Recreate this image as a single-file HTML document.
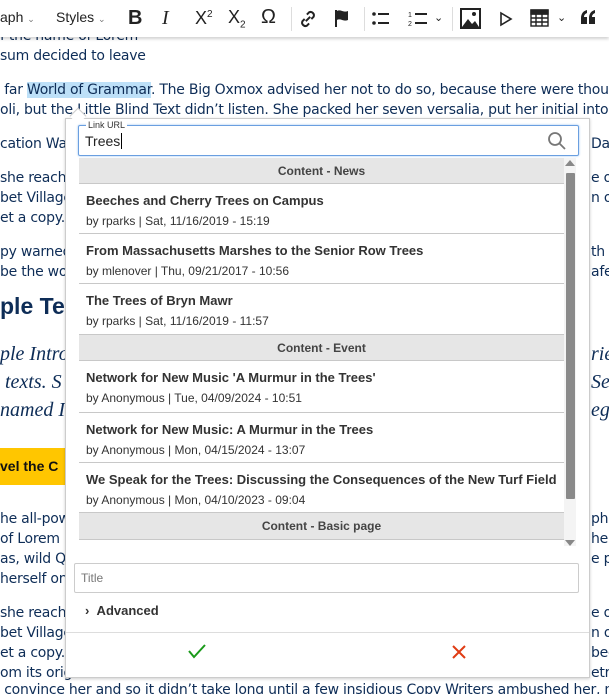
<!DOCTYPE html>
<html><head><meta charset="utf-8"><style>
*{margin:0;padding:0;box-sizing:border-box}
body{width:609px;height:694px;overflow:hidden;background:#fff;position:relative;font-family:"DejaVu Sans","Liberation Sans",sans-serif;color:#0e2d57}
#wrap{position:absolute;left:0;top:0;width:609px;height:694px;overflow:hidden}
.t{position:absolute;font-size:14px;white-space:nowrap;line-height:20px;letter-spacing:-0.25px}
.r{position:absolute;font-size:14px;white-space:nowrap;line-height:20px;left:591px;letter-spacing:-0.25px}
.h{font-family:"Liberation Sans",sans-serif;font-weight:bold;font-size:23px;letter-spacing:0}
.i{font-family:"Liberation Serif",serif;font-style:italic;font-size:20px;letter-spacing:0}
#tb{position:absolute;left:0;top:0;width:609px;height:37px;background:#fff;box-shadow:0 2px 3px rgba(0,0,0,.18);z-index:5;font-family:"Liberation Sans",sans-serif;color:#222;overflow:hidden}
#tb .x{position:absolute;top:9px;font-size:14px}
.dv{position:absolute;top:7px;width:1px;height:24px;background:#ddd}
#pop{position:absolute;left:65px;top:118px;width:525px;height:560px;background:#fff;border:1px solid #ccc;box-shadow:0 1px 3px rgba(0,0,0,.2);z-index:4;font-family:"Liberation Sans",sans-serif;color:#333}
.hd{position:absolute;left:13px;width:485px;height:26px;background:#e6e6e6;border-bottom:1px solid #c8c8c8;text-align:center;font-size:12px;line-height:26px;color:#444;font-weight:bold}
.it{position:absolute;left:13px;width:485px;border-bottom:1px solid #c8c8c8}
.it b{position:absolute;left:7px;top:9px;font-size:13px;color:#333;white-space:nowrap}
.it span{position:absolute;left:7px;top:30px;font-size:12px;color:#333;white-space:nowrap}
</style></head><body>
<div id="wrap">
<div class="t" style="left:0;top:26px">f the name of Lorem</div>
<div class="t" style="left:0;top:46px">sum decided to leave</div>
<div class="t" style="left:0;top:80px">&nbsp;far <span style="background:#bde0f8">World of Grammar</span>. The Big Oxmox advised her not to do so, because there were thou</div>
<div class="t" style="left:0;top:100px">oli, but the Little Blind Text didn’t listen. She packed her seven versalia, put her initial into</div>
<div class="t" style="left:0;top:134px">cation War</div><div class="r" style="top:134px">Dar</div>
<div class="t" style="left:0;top:168px">she reache</div><div class="r" style="top:168px">e o</div>
<div class="t" style="left:0;top:188px">bet Village</div><div class="r" style="top:188px">n o</div>
<div class="t" style="left:0;top:208px">et a copy.</div>
<div class="t" style="left:0;top:242px">py warned</div><div class="r" style="top:242px">th</div>
<div class="t" style="left:0;top:262px">be the wo</div><div class="r" style="top:262px">afe</div>
<div class="t h" style="left:0;top:293px;line-height:26px">ple Te</div>
<div class="t i" style="left:0;top:342px;line-height:24px">ple Intro</div><div class="r i" style="top:342px;line-height:24px">rie</div>
<div class="t i" style="left:0;top:370px;line-height:24px">&nbsp;texts. S</div><div class="r i" style="top:370px;line-height:24px">Se</div>
<div class="t i" style="left:0;top:398px;line-height:24px">named I</div><div class="r i" style="top:398px;line-height:24px">eg</div>
<div style="position:absolute;left:0;top:448px;width:70px;height:37px;background:#ffc600"></div>
<div class="t" style="left:0;top:456px;font-family:'Liberation Sans',sans-serif;font-weight:bold;color:#111;letter-spacing:0">vel the C</div>
<div class="t" style="left:0;top:509px">he all-pow</div><div class="r" style="top:509px">ph</div>
<div class="t" style="left:0;top:529px">of Lorem I</div><div class="r" style="top:529px">he</div>
<div class="t" style="left:0;top:549px">as, wild Q</div><div class="r" style="top:549px">e p</div>
<div class="t" style="left:0;top:569px">herself on</div>
<div class="t" style="left:0;top:603px">she reache</div><div class="r" style="top:603px">e o</div>
<div class="t" style="left:0;top:623px">bet Village</div><div class="r" style="top:623px">n o</div>
<div class="t" style="left:0;top:643px">et a copy.</div><div class="r" style="top:643px">bec</div>
<div class="t" style="left:0;top:663px">om its orig</div><div class="r" style="top:663px">etr</div>
<div class="t" style="left:0;top:680px">&nbsp;convince her and so it didn’t take long until a few insidious Copy Writers ambushed her, m</div>
</div>

<div id="tb">
<div class="x" style="left:0">aph <span style="font-size:9px;color:#777">⌄</span></div>
<div class="x" style="left:56px">Styles <span style="font-size:9px;color:#777">⌄</span></div>
<div class="x" style="left:128px;font-size:20px;font-weight:bold;top:7px">B</div>
<div class="x" style="left:162px;font-size:20px;font-style:italic;font-family:'Liberation Serif',serif;top:7px">I</div>
<div class="x" style="left:195px;font-size:18px;top:8px">X<sup style="font-size:10px">2</sup></div>
<div class="x" style="left:228px;font-size:18px;top:7px">X<sub style="font-size:10px">2</sub></div>
<div class="x" style="left:261px;font-size:20px;top:6px">Ω</div>
<div class="dv" style="left:291px"></div>
<svg style="position:absolute;left:298px;top:9px" width="20" height="20" viewBox="0 0 18 18" fill="none" stroke="#222" stroke-width="1.8"><path d="M7 11l4-4M8 5l2-2a3 3 0 014 4l-2 2M10 13l-2 2a3 3 0 01-4-4l2-2"/></svg>
<svg style="position:absolute;left:333px;top:8px" width="20" height="20" viewBox="0 0 20 20"><path d="M3 2v17" stroke="#222" stroke-width="2"/><path d="M4 3c4-2 6 2 11 0v9c-5 2-7-2-11 0z" fill="#222"/></svg>
<div class="dv" style="left:364px"></div>
<svg style="position:absolute;left:372px;top:11px" width="18" height="16" viewBox="0 0 18 16" fill="#222"><circle cx="2" cy="3" r="1.8"/><circle cx="2" cy="12" r="1.8"/><rect x="6" y="2" width="11" height="2"/><rect x="6" y="11" width="11" height="2"/></svg>
<svg style="position:absolute;left:408px;top:10px" width="20" height="18" viewBox="0 0 20 18" fill="#222"><text x="0" y="7" font-size="7" font-family="Liberation Sans">1</text><text x="0" y="16" font-size="7" font-family="Liberation Sans">2</text><rect x="7" y="3" width="12" height="2"/><rect x="7" y="12" width="12" height="2"/></svg>
<div class="x" style="left:434px;font-size:11px;top:11px">⌄</div>
<div class="dv" style="left:452px"></div>
<svg style="position:absolute;left:460px;top:8px" width="21" height="21" viewBox="0 0 21 21"><rect x="1" y="1" width="19" height="19" fill="none" stroke="#222" stroke-width="2"/><path d="M2 19l6-8 4 5 3-3 4 6z" fill="#222"/><circle cx="14" cy="6" r="2" fill="#222"/></svg>
<svg style="position:absolute;left:499px;top:11px" width="14" height="16" viewBox="0 0 14 16"><path d="M2 2l10 6-10 6z" fill="none" stroke="#222" stroke-width="1.6"/></svg>
<svg style="position:absolute;left:530px;top:9px" width="19" height="18" viewBox="0 0 19 18" fill="none" stroke="#222" stroke-width="1.4"><rect x="1" y="1" width="17" height="16"/><path d="M1 5h17M1 9h17M1 13h17M6 5v12M12 5v12"/><rect x="1" y="1" width="17" height="4" fill="#222"/></svg>
<div class="x" style="left:557px;font-size:11px;top:11px">⌄</div>
<svg style="position:absolute;left:580px;top:10px" width="16" height="14" viewBox="0 0 16 14" fill="#222"><path d="M1 14V8c0-4 2-7 6-8v3c-2 1-3 2-3 4h3v7zM9 14V8c0-4 2-7 6-8v3c-2 1-3 2-3 4h3v7z"/></svg>
</div>

<div style="position:absolute;left:72px;top:110px;width:12px;height:12px;background:#fff;border-left:1px solid #ccc;border-top:1px solid #ccc;transform:rotate(45deg);z-index:5"></div>
<div id="pop">
<div style="position:absolute;left:12px;top:6px;width:501px;height:31px;border:1px solid #6a9fe0;border-radius:2px;box-shadow:0 0 2px #9cc3f0"></div>
<div style="position:absolute;left:20px;top:1px;font-size:9px;background:#fff;padding:0 2px;color:#333">Link URL</div>
<div style="position:absolute;left:19px;top:14px;font-size:14px;color:#222">Trees<span style="border-left:1px solid #000;margin-left:1px"></span></div>
<svg style="position:absolute;left:481px;top:12px" width="20" height="20" viewBox="0 0 20 20" fill="none" stroke="#777" stroke-width="1.8"><circle cx="8" cy="8" r="6"/><path d="M12.5 12.5L18 18"/></svg>
<div class="hd" style="top:39px">Content - News</div>
<div class="it" style="top:65px;height:50px"><b>Beeches and Cherry Trees on Campus</b><span>by rparks | Sat, 11/16/2019 - 15:19</span></div>
<div class="it" style="top:115px;height:50px"><b>From Massachusetts Marshes to the Senior Row Trees</b><span>by mlenover | Thu, 09/21/2017 - 10:56</span></div>
<div class="it" style="top:165px;height:51px"><b>The Trees of Bryn Mawr</b><span>by rparks | Sat, 11/16/2019 - 11:57</span></div>
<div class="hd" style="top:216px">Content - Event</div>
<div class="it" style="top:242px;height:52px"><b>Network for New Music 'A Murmur in the Trees'</b><span>by Anonymous | Tue, 04/09/2024 - 10:51</span></div>
<div class="it" style="top:294px;height:50px"><b>Network for New Music: A Murmur in the Trees</b><span>by Anonymous | Mon, 04/15/2024 - 13:07</span></div>
<div class="it" style="top:344px;height:50px"><b>We Speak for the Trees: Discussing the Consequences of the New Turf Field</b><span>by Anonymous | Mon, 04/10/2023 - 09:04</span></div>
<div class="hd" style="top:394px;height:27px">Content - Basic page</div>
<div style="position:absolute;left:498px;top:39px;width:12px;height:388px;background:#f4f4f4"></div>
<div style="position:absolute;left:500px;top:54px;width:9px;height:326px;background:#8a8a8a;border-radius:1px"></div>
<div style="position:absolute;left:499px;top:41px;width:0;height:0;border-left:5px solid transparent;border-right:5px solid transparent;border-bottom:6px solid #888"></div>
<div style="position:absolute;left:499px;top:421px;width:0;height:0;border-left:5px solid transparent;border-right:5px solid transparent;border-top:6px solid #888"></div>
<div style="position:absolute;left:8px;top:444px;width:505px;height:30px;border:1px solid #ccc;border-radius:2px"></div>
<div style="position:absolute;left:15px;top:452px;font-size:12px;color:#777">Title</div>
<div style="position:absolute;left:19px;top:484px;font-size:13px;font-weight:bold;color:#333">›&nbsp;&nbsp;Advanced</div>
<div style="position:absolute;left:0;top:513px;width:523px;height:1px;background:#ddd"></div>
<svg style="position:absolute;left:121px;top:524px" width="20" height="16" viewBox="0 0 20 16"><path d="M2 8l5 6L18 2" fill="none" stroke="#1a9a1a" stroke-width="2"/></svg>
<svg style="position:absolute;left:386px;top:526px" width="14" height="14" viewBox="0 0 14 14"><path d="M1 1l12 12M13 1L1 13" stroke="#e03c14" stroke-width="2"/></svg>
</div>
</body></html>
